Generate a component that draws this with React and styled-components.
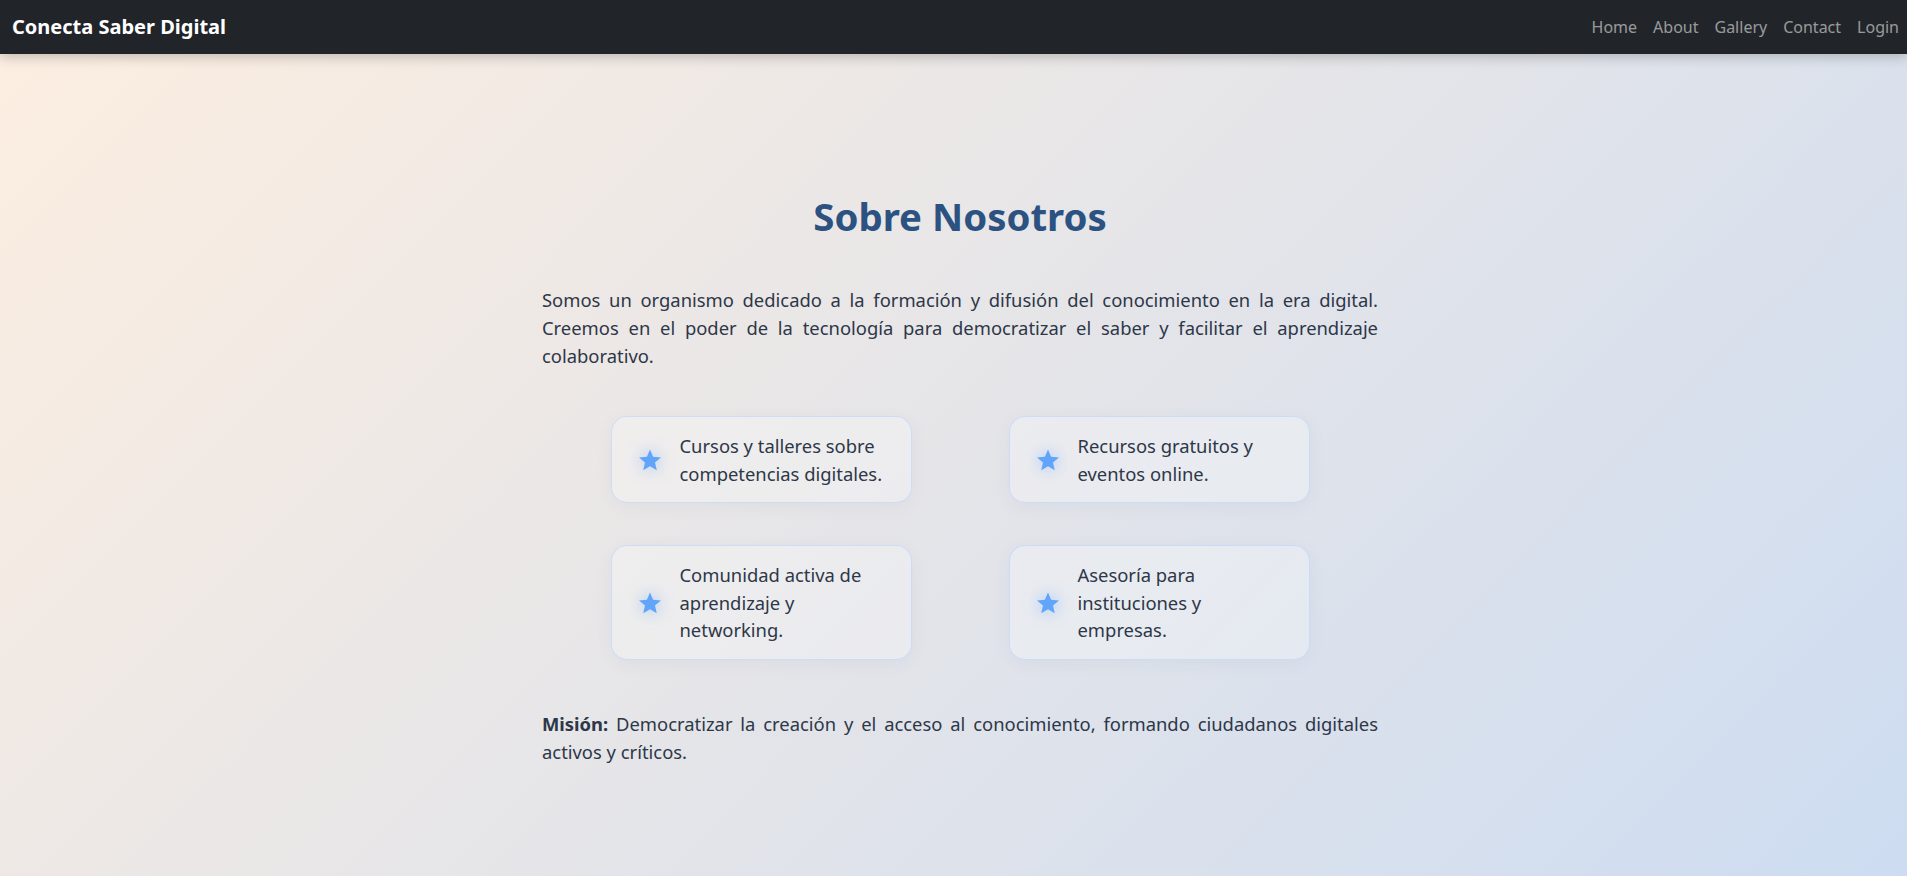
import React from "react";
import styled, { createGlobalStyle } from "styled-components";

const GlobalStyle = createGlobalStyle`
  * { box-sizing: border-box; }
  html, body { margin: 0; padding: 0; }
  body {
    font-family: "Noto Sans", "Open Sans", sans-serif;
    color: #2d3748;
    min-height: 100vh;
    background: linear-gradient(135deg, #fdeee0 0%, #cddcf1 100%);
    background-attachment: fixed;
  }
`;

const Page = styled.div`
  min-height: 100vh;
  display: flex;
  flex-direction: column;
`;

const NavBar = styled.nav`
  height: 54px;
  background: #212529;
  display: flex;
  align-items: center;
  justify-content: space-between;
  padding: 0 0 0 12px;
  box-shadow: 0 3px 12px rgba(0, 0, 0, 0.22);
  position: relative;
  z-index: 1;
`;

const Brand = styled.a`
  color: #ffffff;
  font-size: 20px;
  font-weight: 700;
  text-decoration: none;
  line-height: 30px;
`;

const NavList = styled.ul`
  display: flex;
  list-style: none;
  margin: 0;
  padding: 0;
`;

const NavLink = styled.a`
  display: block;
  padding: 8px 8px;
  color: rgba(255, 255, 255, 0.55);
  font-size: 16px;
  line-height: 24px;
  text-decoration: none;
`;

const Main = styled.main`
  flex: 1;
  display: flex;
  justify-content: center;
  padding: 138px 0 60px 13px;
`;

const Content = styled.section`
  width: 836px;
`;

const Title = styled.h1`
  margin: 0 0 46px;
  text-align: center;
  font-size: 38.4px;
  line-height: 48px;
  font-weight: 700;
  color: #2c5282;
`;

const Paragraph = styled.p`
  margin: 0 0 ${(p) => p.$mb || 0}px;
  font-size: 18.4px;
  line-height: 28px;
  text-align: justify;
`;

const CardGrid = styled.ul`
  list-style: none;
  margin: 0 0 50px;
  padding: 0;
  display: grid;
  grid-template-columns: repeat(2, 301px);
  column-gap: 97px;
  row-gap: 42px;
  justify-content: center;
  align-items: start;
`;

const Card = styled.li`
  display: flex;
  align-items: center;
  gap: 18px;
  padding: 15px 24px 15px 26px;
  border: 1px solid rgba(191, 214, 250, 0.7);
  border-radius: 16px;
  background: rgba(255, 255, 255, 0.28);
  box-shadow: 0 4px 18px rgba(60, 80, 120, 0.05);
`;

const StarWrap = styled.span`
  flex: 0 0 auto;
  width: 24px;
  height: 24px;
  display: flex;
  filter: drop-shadow(0 0 8px rgba(96, 165, 250, 0.6));
`;

const CardText = styled.span`
  font-size: 18.4px;
  line-height: 27.6px;
  color: #2d3748;
`;

const Star = () => (
  <StarWrap>
    <svg width="24" height="24" viewBox="0 0 24 24">
      <path
        d="M12 1.5l3.09 7.26 7.86.68-5.96 5.17 1.79 7.69L12 18.2l-6.78 4.1 1.79-7.69L1.05 9.44l7.86-.68z"
        fill="#60a5fa"
      />
    </svg>
  </StarWrap>
);

const items = [
  "Cursos y talleres sobre competencias digitales.",
  "Recursos gratuitos y eventos online.",
  "Comunidad activa de aprendizaje y networking.",
  "Asesoría para instituciones y empresas.",
];

export default function App() {
  return (
    <>
      <GlobalStyle />
      <Page>
        <NavBar>
          <Brand href="#">Conecta Saber Digital</Brand>
          <NavList>
            {["Home", "About", "Gallery", "Contact", "Login"].map((l) => (
              <li key={l}>
                <NavLink href="#">{l}</NavLink>
              </li>
            ))}
          </NavList>
        </NavBar>
        <Main>
          <Content>
            <Title>Sobre Nosotros</Title>
            <Paragraph $mb={46}>
              Somos un organismo dedicado a la formación y difusión del
              conocimiento en la era digital. Creemos en el poder de la
              tecnología para democratizar el saber y facilitar el aprendizaje
              colaborativo.
            </Paragraph>
            <CardGrid>
              {items.map((t) => (
                <Card key={t}>
                  <Star />
                  <CardText>{t}</CardText>
                </Card>
              ))}
            </CardGrid>
            <Paragraph>
              <strong>Misión:</strong> Democratizar la creación y el acceso al
              conocimiento, formando ciudadanos digitales activos y críticos.
            </Paragraph>
          </Content>
        </Main>
      </Page>
    </>
  );
}
